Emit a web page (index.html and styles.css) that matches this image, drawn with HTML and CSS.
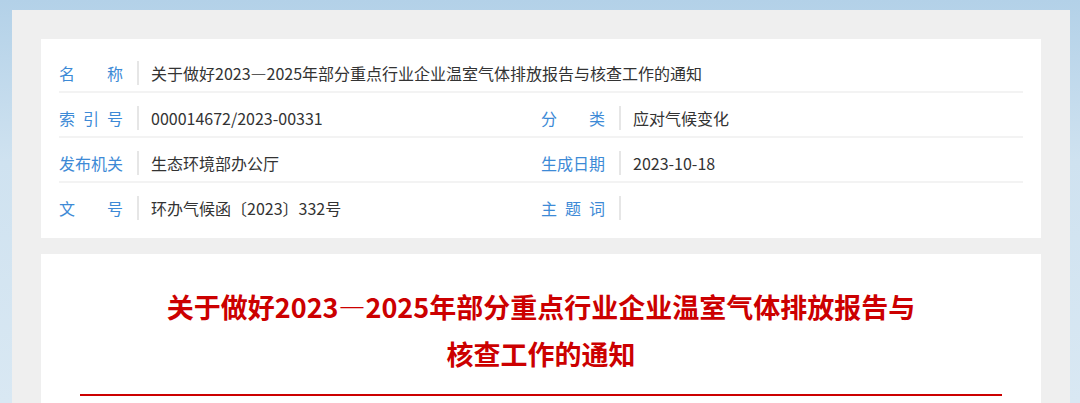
FILE: index.html
```html
<!DOCTYPE html>
<html lang="zh-CN">
<head>
<meta charset="utf-8">
<title>关于做好2023—2025年部分重点行业企业温室气体排放报告与核查工作的通知</title>
<link rel="stylesheet" href="styles.css">
</head>
<body>
<div class="panel">
  <div class="card info">
    <div class="row">
      <div class="cell">
        <div class="label"><span>名</span><span>称</span></div>
        <div class="value">关于做好2023—2025年部分重点行业企业温室气体排放报告与核查工作的通知</div>
      </div>
    </div>
    <div class="row">
      <div class="cell">
        <div class="label"><span>索</span><span>引</span><span>号</span></div>
        <div class="value">000014672/2023-00331</div>
      </div>
      <div class="cell">
        <div class="label"><span>分</span><span>类</span></div>
        <div class="value">应对气候变化</div>
      </div>
    </div>
    <div class="row">
      <div class="cell">
        <div class="label"><span>发</span><span>布</span><span>机</span><span>关</span></div>
        <div class="value">生态环境部办公厅</div>
      </div>
      <div class="cell">
        <div class="label"><span>生</span><span>成</span><span>日</span><span>期</span></div>
        <div class="value">2023-10-18</div>
      </div>
    </div>
    <div class="row last">
      <div class="cell">
        <div class="label"><span>文</span><span>号</span></div>
        <div class="value">环办气候函〔2023〕332号</div>
      </div>
      <div class="cell">
        <div class="label"><span>主</span><span>题</span><span>词</span></div>
        <div class="value"></div>
      </div>
    </div>
  </div>
  <div class="card article">
    <h1 class="title">关于做好2023—2025年部分重点行业企业温室气体排放报告与<br>核查工作的通知</h1>
    <div class="rule"></div>
  </div>
</div>
</body>
</html>
```

FILE: styles.css
```css
html, body {
  margin: 0;
  padding: 0;
  height: 100%;
  overflow: hidden;
}
body {
  background: linear-gradient(180deg, #b3d1e8 0%, #cfe2f0 40%, #d9e8f3 100%);
  padding: 10px 10px 0 12px;
  box-sizing: border-box;
  font-family: "Noto Sans CJK SC", "Microsoft YaHei", sans-serif;
}
.panel {
  background: #efefef;
  padding: 29px 29px 40px 29px;
  min-height: 500px;
}
.card {
  background: #ffffff;
}
.info {
  padding: 9px 18px 10px 18px;
  margin-bottom: 16px;
}
.row {
  display: flex;
  height: 45px;
  box-sizing: border-box;
  padding-top: 13px;
  border-bottom: 2px solid #f3f3f3;
}
.row.last {
  border-bottom: none;
}
.cell {
  flex: 1;
  display: flex;
  align-items: center;
  height: 24px;
  min-width: 0;
}
.label {
  width: 64px;
  flex: none;
  display: flex;
  justify-content: space-between;
  color: #3d8ad6;
  font-size: 16px;
  line-height: 24px;
  padding-right: 14px;
  margin-right: 12px;
  border-right: 2px solid #e6e6e6;
}
.value {
  color: #333333;
  font-size: 16px;
  line-height: 24px;
  white-space: nowrap;
}
.article {
  padding: 29px 39px 0 39px;
  min-height: 200px;
}
.title {
  margin: 0;
  text-align: center;
  color: #cc0000;
  font-size: 27px;
  font-weight: 700;
  line-height: 47px;
}
.rule {
  margin-top: 17px;
  height: 2px;
  background: #cc0000;
}
```
